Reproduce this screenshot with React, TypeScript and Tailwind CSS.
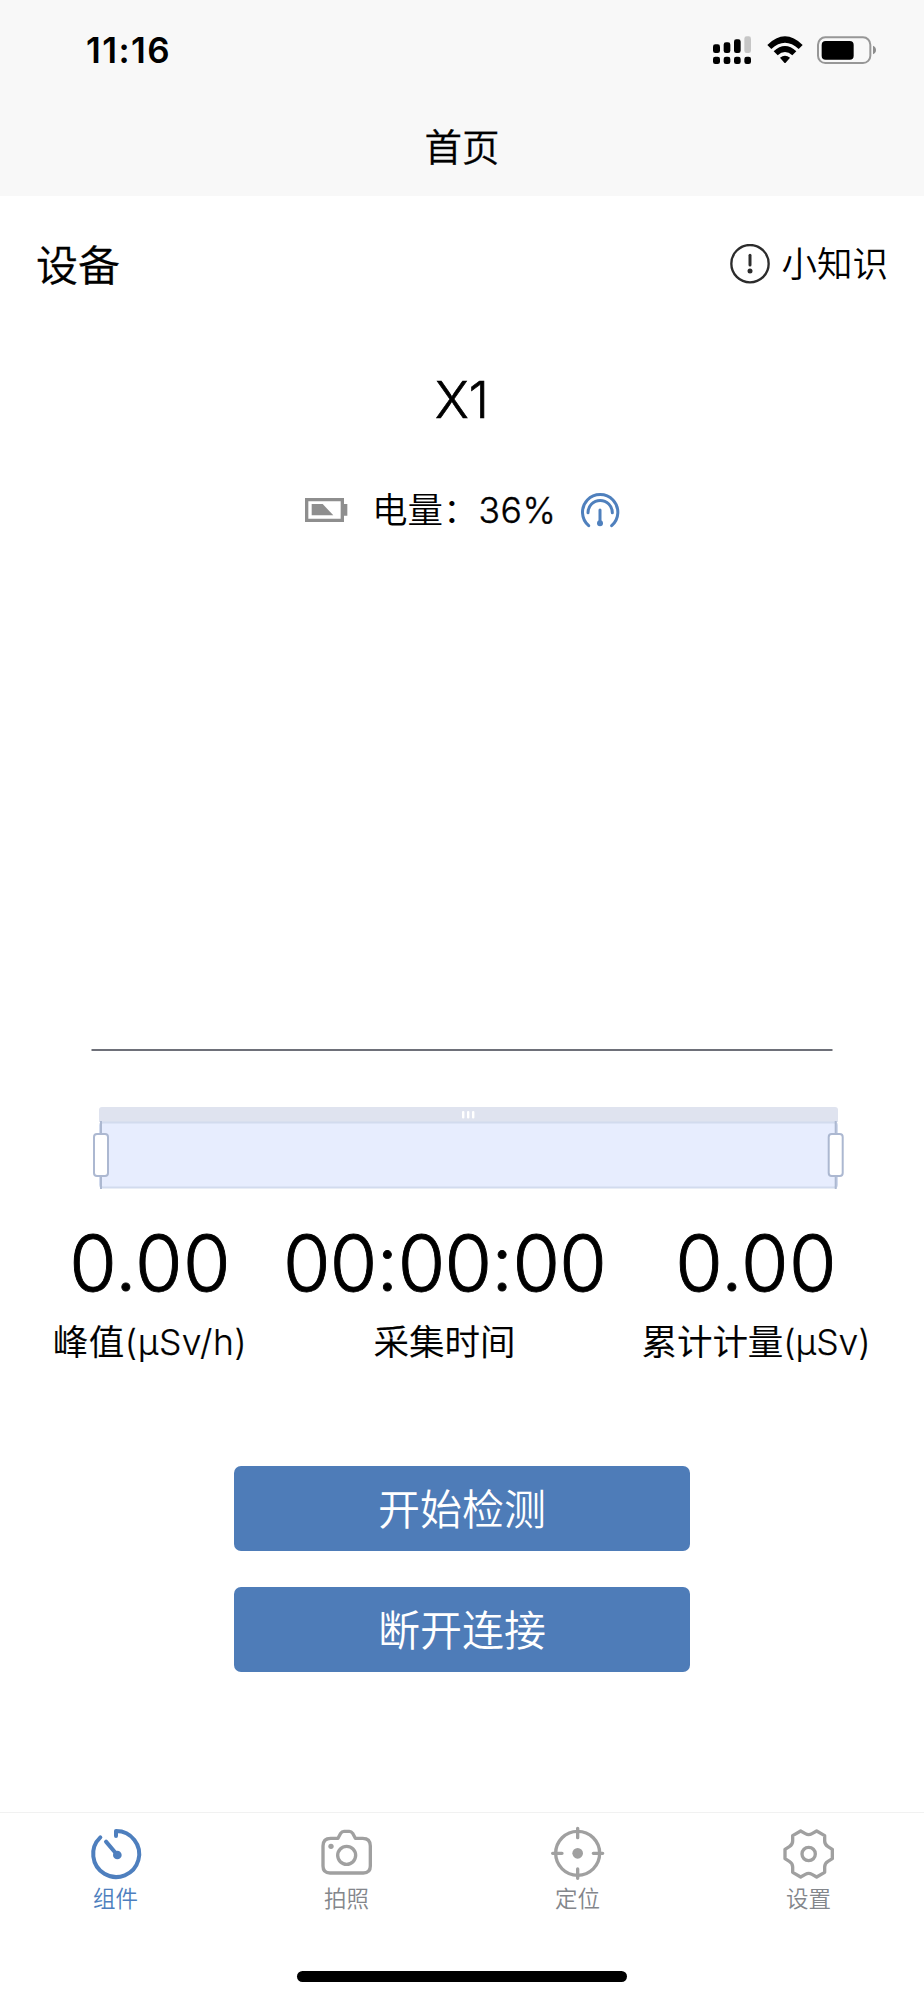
import type { ReactNode } from 'react'

const stats = [
  { value: '0.00', label: '峰值(μSv/h)', width: 'w-[192px]', valueTracking: 'tracking-[0.3px]', labelTracking: 'tracking-[0.5px]' },
  { value: '00:00:00', label: '采集时间', width: 'w-[320px]', valueTracking: 'tracking-[-0.7px]', labelTracking: '' },
  { value: '0.00', label: '累计计量(μSv)', width: 'w-[226px]', valueTracking: 'tracking-[0.3px]', labelTracking: 'tracking-[-0.1px]' },
]

function StatusBar() {
  return (
    <div className="flex h-[100px] items-center justify-between pr-[46px] pl-[86px]">
      <span className="pt-px text-[35px] leading-none font-semibold tracking-[1.4px]">11:16</span>
      <div className="flex items-center">
        {/* Signal */}
        <svg className="h-[28px] w-[40px]" viewBox="0 0 120 84">
          <rect x="0" y="25" width="21" height="26" rx="7" />
          <rect x="32" y="19" width="20" height="32" rx="7" />
          <rect x="63" y="10" width="20" height="41" rx="7" />
          <rect x="94" y="1" width="20" height="50" rx="7" fill="#c6c6c6" />
          <rect x="0" y="62" width="21" height="22" rx="7" />
          <rect x="32" y="62" width="20" height="22" rx="7" />
          <rect x="63" y="62" width="20" height="22" rx="7" />
          <rect x="94" y="62" width="20" height="22" rx="7" />
        </svg>
        {/* Wifi */}
        <svg className="ml-[14px] h-[28px] w-[36px]" viewBox="0 0 108 84">
          <path d="M1 27Q54-25 107 27L95 39Q54 1 13 39Z" strokeLinejoin="round" />
          <path d="M20 46Q54 14 88 46L76 58Q54 38 32 58Z" />
          <path d="M39 65Q54 53 69 65L56 80Q54 82 52 80Z" />
        </svg>
        {/* Battery */}
        <svg className="ml-[14px] h-[28px] w-[61px]" viewBox="0 0 183 84">
          <rect x="3" y="4" width="157" height="77" rx="22" fill="none" stroke="#979797" strokeWidth="6" />
          <rect x="14" y="15" width="96" height="56" rx="12" />
          <path d="M168 29Q177 33 177 42T168 55Z" fill="#8d8d8d" />
        </svg>
      </div>
    </div>
  )
}

function ZoomChart() {
  return (
    <svg className="block h-[160px] w-full" viewBox="0 0 924 160">
      {/* Axis line */}
      <rect x="91.5" y="9" width="741" height="2" fill="#6e7079" />

      {/* Range slider */}
      <path d="M99 82V70q0-3 3-3h733q3 0 3 3v12Z" fill="#dfe3ef" />
      <rect x="100" y="82.5" width="737" height="65" rx="3" fill="#e7edfe" stroke="#d2dbee" strokeWidth="2" />
      <g fill="#fff">
        <rect x="462" y="71" width="2.4" height="7.5" rx="1" />
        <rect x="467" y="71" width="2.4" height="7.5" rx="1" />
        <rect x="472" y="71" width="2.4" height="7.5" rx="1" />
      </g>
      <g stroke="#acb8d1" strokeWidth="2" fill="#fff">
        <path d="M101 81v68M835.7 81v68" />
        <rect x="94" y="94" width="14" height="42" rx="3" />
        <rect x="828.7" y="94" width="14" height="42" rx="3" />
      </g>
    </svg>
  )
}

function TabItem({ label, active, children }: { label: string; active?: boolean; children: ReactNode }) {
  return (
    <button
      className={`flex flex-1 flex-col items-center pt-[13px] ${active ? 'text-[#4e7fbe]' : 'text-[#a0a0a0]'}`}
    >
      <svg
        className="h-[56px] w-[56px]"
        viewBox="-83 -84 168 168"
        fill="none"
        stroke="currentColor"
        strokeWidth="10"
        strokeLinecap="round"
        strokeLinejoin="round"
      >
        {children}
      </svg>
      <span className={`text-[22.5px] leading-[33px] ${active ? '' : 'text-[#83868b]'}`}>{label}</span>
    </button>
  )
}

export default function App() {
  return (
    <div className="flex h-[2000px] w-[924px] flex-col bg-white font-['Inter','Noto_Sans_CJK_SC',sans-serif] font-[350] text-black">
      <header className="h-[196px] bg-[#f8f8f8]">
        <StatusBar />
        <h1 className="text-center text-[37.5px] leading-[96px] font-[350] [-webkit-text-stroke:0.3px]">首页</h1>
      </header>

      <main className="flex-1">
        {/* Device header */}
        <div className="flex h-[136px] items-center justify-between pr-[36px] pl-[36px]">
          <h2 className="pt-[3px] text-[42px] leading-none font-[350] [-webkit-text-stroke:0.3px]">设备</h2>
          <div className="flex items-center gap-[11px]">
            <svg className="h-[40px] w-[40px]" viewBox="0 0 120 120" fill="none" stroke="#2c2c2c">
              <circle cx="60" cy="59" r="56" strokeWidth="7" />
              <path d="M60 34V63" strokeWidth="9" strokeLinecap="round" />
              <circle cx="60" cy="81" r="7.500" fill="#2c2c2c" stroke="none" />
            </svg>
            <span className="pt-[2px] text-[35.5px] leading-none">小知识</span>
          </div>
        </div>

        <div className="mt-[36px] text-center text-[51px] leading-[64px] [-webkit-text-stroke:0.7px]">X1</div>

        {/* Battery level */}
        <div className="mt-[46px] flex h-[64px] items-center pl-[304px]">
          <svg className="h-[26px] w-[44px]" viewBox="0 0 132 78" fill="#8e8e8e">
            <path d="M3 3H120V21H130V56H120V75H3ZM13 13V65H110V13Z" fillRule="evenodd" />
            <path d="M23 21H56L88 55H23Z" />
          </svg>
          <span className="mt-px ml-[24px] w-[183px] text-[35.5px] leading-none whitespace-nowrap">
            电量：<span className="tracking-[0.5px] [-webkit-text-stroke:0.4px]">36%</span>
          </span>
          <svg
            className="mt-[4px] ml-[25px] h-[40px] w-[40px]"
            viewBox="-60 -60 120 120"
            fill="none"
            stroke="#4f80bd"
            strokeWidth="9"
            strokeLinecap="round"
          >
            <path d="M-34 41A53 53 0 1 1 35 41" />
            <path d="M-36 2A36.500 36.500 0 1 1 37 2" />
            <path d="M0-6V32" />
            <circle cx="0" cy="34" r="9" fill="#4f80bd" stroke="none" />
          </svg>
        </div>

        <div className="mt-[498px]">
          <ZoomChart />
        </div>

        {/* Readings */}
        <div className="mt-[18px] flex justify-between pr-[55px] pl-[54px] [font-feature-settings:'calt'_0]">
          {stats.map((stat) => (
            <div key={stat.label} className={`flex flex-col items-center whitespace-nowrap ${stat.width}`}>
              <div className={`text-[77px] leading-[90px] [-webkit-text-stroke:0.9px] ${stat.valueTracking}`}>
                {stat.value}
              </div>
              <div className={`mt-[10px] text-[35.5px] leading-[50px] [-webkit-text-stroke:0.2px] ${stat.labelTracking}`}>
                {stat.label}
              </div>
            </div>
          ))}
        </div>

        {/* Actions */}
        <div className="mt-[98px] flex flex-col items-center gap-[36px]">
          <button className="h-[85px] w-[456px] rounded-[7px] bg-[#4e7cb8] pt-[3px] text-[42px] leading-none text-white">
            开始检测
          </button>
          <button className="h-[85px] w-[456px] rounded-[7px] bg-[#4e7cb8] pt-[3px] text-[42px] leading-none text-white">
            断开连接
          </button>
        </div>
      </main>

      <nav className="flex h-[159px] border-t border-[#f1f1f1]">
        <TabItem label="组件" active>
          <path d="M1-54V-69A69 69 0 1 1-46-50" strokeWidth="12" />
          <path d="M-29-37L5 3" strokeWidth="12" />
          <circle cx="5" cy="3" r="13" fill="currentColor" stroke="none" />
        </TabItem>
        <TabItem label="拍照">
          <path d="M-26-47L-18-62Q-14-68-8-68H8Q14-68 18-62L26-47H48Q71-47 71-24V36Q71 57 50 57H-50Q-71 57-71 36V-24Q-71-47-48-47Z" />
          <circle cx="0" cy="4" r="27" />
          <circle cx="-47" cy="-23" r="8" fill="currentColor" stroke="none" />
        </TabItem>
        <TabItem label="定位">
          <circle cx="0" cy="-2" r="66" />
          <path d="M0-77V-49M0 45V73M-75-2H-47M47-2H75" />
          <circle cx="0" cy="-2" r="16" fill="currentColor" stroke="none" />
        </TabItem>
        <TabItem label="设置">
          <path d="M-24-69L-10-61Q0-55 10-61L24-69L48-55V-39Q48-28 58-22L71-14V14L58 22Q48 28 48 39V55L24 69L10 61Q0 55-10 61L-24 69L-48 55V39Q-48 28-58 22L-71 14V-14L-58-22Q-48-28-48-39V-55Z" />
          <circle cx="0" cy="0" r="20" />
        </TabItem>
      </nav>

      {/* Home indicator */}
      <div className="flex h-[29px] justify-center">
        <div className="h-[11px] w-[330px] rounded-full bg-black" />
      </div>
    </div>
  )
}
